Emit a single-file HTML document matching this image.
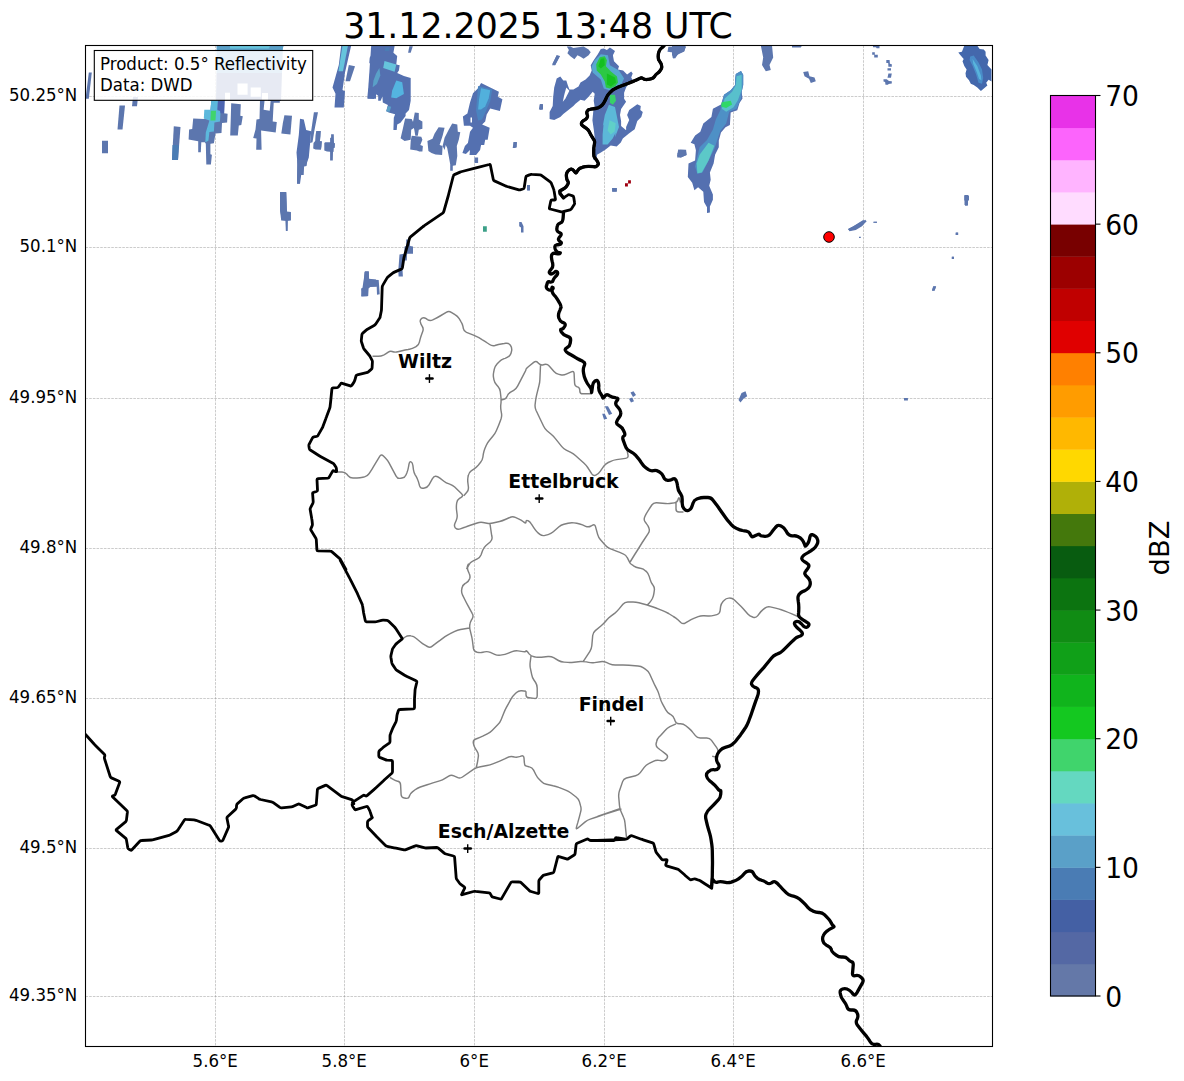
<!DOCTYPE html><html><head><meta charset="utf-8"><title>Radar</title><style>html,body{margin:0;padding:0;background:#fff}</style></head><body><svg width="1184" height="1081" viewBox="0 0 1184 1081" style="display:block;font-family:'DejaVu Sans','Liberation Sans',sans-serif">
<rect width="1184" height="1081" fill="#fff"/>
<defs><clipPath id="ax"><rect x="85.5" y="45.5" width="907.0" height="1001.0"/></clipPath></defs>
<g clip-path="url(#ax)">
<path d="M85.5 96.5H992.5M85.5 247.5H992.5M85.5 398.5H992.5M85.5 548.5H992.5M85.5 698.5H992.5M85.5 848.5H992.5M85.5 996.5H992.5M215.5 45.5V1046.5M344.5 45.5V1046.5M474.5 45.5V1046.5M604.5 45.5V1046.5M733.5 45.5V1046.5M863.5 45.5V1046.5" fill="none" stroke="#808080" stroke-opacity="0.5" stroke-width="0.8" stroke-dasharray="2.57 1.11"/>
<path d="M88.8 72.5L91.8 72.5L88.8 98.8L85.5 98.8Z" fill="#5c76ae"/>
<path d="M119.5 105.5L125.0 105.5L122.5 129.5L117.5 129.5Z" fill="#5c76ae"/>
<path d="M133.0 97.0L138.0 97.0L137.0 106.2L132.0 106.2Z" fill="#5c76ae"/>
<path d="M102.0 140.8L108.0 140.8L108.0 153.2L102.0 153.2Z" fill="#5c76ae"/>
<path d="M173.8 126.2L180.5 127.0L178.0 160.0L172.0 160.0Z" fill="#5c76ae"/>
<path d="M172.5 145.0L178.8 145.0L178.0 160.0L172.0 160.0Z" fill="#4a7cb4"/>
<path d="M216.5 45.0L283.0 45.0L282.0 73.0L216.5 73.0Z" fill="#6aa8d4"/>
<path d="M216.5 73.0L282.0 73.0L281.0 101.0L216.0 101.0Z" fill="#5c76ae"/>
<path d="M237.5 83.6L247.6 83.6L247.6 94.7L237.5 94.7Z" fill="#fff"/>
<path d="M250.7 87.6L260.8 87.6L260.8 96.7L250.7 96.7Z" fill="#fff"/>
<path d="M225.0 92.7L230.0 92.7L230.0 101.0L225.0 101.0Z" fill="#fff"/>
<path d="M262.0 93.0L268.0 93.0L268.0 101.0L262.0 101.0Z" fill="#fff"/>
<path d="M217.0 45.5L283.8 45.5L282.0 50.5L217.0 50.5Z" fill="#5aa0c8"/>
<path d="M230.0 45.5L270.0 45.5L268.8 48.5L230.0 48.5Z" fill="#66c4dc"/>
<path d="M300.0 118.8L303.8 119.5L306.2 130.0L311.2 131.2L308.8 157.5L306.2 165.0L302.5 165.0L300.0 183.8L297.0 183.8L297.5 165.0L296.5 152.5L298.8 135.0Z" fill="#5470b0"/>
<path d="M280.0 192.0L286.2 192.5L287.0 212.0L290.8 212.5L290.8 220.0L287.5 220.5L287.5 230.8L285.8 230.8L285.5 220.5L282.0 220.0L280.0 210.0Z" fill="#5c76ae"/>
<path d="M341.2 45.5L351.2 45.5L345.0 72.5L342.5 90.0L345.0 91.2L343.8 107.5L334.5 107.5L335.5 93.8L332.5 87.5L338.8 65.0Z" fill="#5470b0"/>
<path d="M342.5 45.5L348.0 45.5L343.0 71.2L338.5 71.2Z" fill="#66c4dc"/>
<path d="M348.8 65.0L355.0 66.2L350.0 81.2L345.5 81.2Z" fill="#5c76ae"/>
<path d="M371.2 45.5L376.0 45.5L376.0 98.8L367.5 98.8Z" fill="#5470b0"/>
<path d="M365.0 271.2L368.8 271.2L368.8 278.8L376.0 279.5L376.0 286.2L367.5 287.5L367.5 296.2L361.2 296.2Z" fill="#5c76ae"/>
<path d="M193.2 118.4L204.3 118.9L210.4 110.3L211.4 100.1L224.6 100.1L224.1 113.3L227.6 113.8L227.1 122.4L222.0 122.9L221.5 133.1L215.5 133.6L213.9 143.2L210.4 143.7L210.4 154.3L211.9 154.8L210.9 164.5L206.3 164.5L205.8 143.7L204.8 142.2L201.3 142.2L200.8 152.3L198.2 152.3L198.2 141.2L188.6 139.6L189.1 129.5L192.2 129.0Z" fill="#5c76ae"/>
<path d="M204.3 109.8L210.4 109.8L211.4 100.1L218.0 100.1L217.5 110.3L220.5 111.3L220.0 121.4L214.4 122.4L213.9 131.5L209.4 132.0L208.4 140.7L205.3 142.2L205.8 132.6L209.4 120.4L203.8 118.4Z" fill="#5cb8dc"/>
<path d="M210.9 110.8L216.0 110.8L215.5 120.4L210.4 120.4Z" fill="#40d46c"/>
<path d="M218.0 100.1L224.6 100.1L224.1 113.3L220.5 113.3L220.0 110.3L217.5 109.8Z" fill="#4c64b0"/>
<path d="M231.2 103.2L240.8 104.2L240.3 115.8L242.8 116.3L241.3 125.0L238.8 125.5L237.8 135.6L230.2 135.4L230.7 120.4Z" fill="#5c76ae"/>
<path d="M260.0 100.1L264.6 100.1L263.6 109.8L269.7 110.8L270.7 100.1L279.8 100.1L279.8 102.7L273.7 102.7L272.7 121.4L276.8 121.9L275.7 132.6L261.1 130.5L261.6 149.8L256.2 149.8L256.5 138.6L253.2 138.1L255.5 129.5L256.5 119.4L259.5 118.9Z" fill="#5c76ae"/>
<path d="M284.4 115.3L292.0 115.8L290.4 134.6L281.3 133.6L282.8 123.4Z" fill="#5c76ae"/>
<path d="M313.9 112.2L318.0 112.2L314.5 130.1L312.5 142.3L310.1 143.0L310.8 133.5Z" fill="#5c76ae"/>
<path d="M316.2 131.1L320.9 131.1L320.6 136.2L319.9 140.9L322.0 141.3L321.6 146.4L320.9 149.7L315.5 149.4L313.2 148.4L313.5 143.0L315.2 140.9L315.5 135.5Z" fill="#5c76ae"/>
<path d="M331.1 134.2L333.8 134.2L334.0 143.0L335.0 143.3L334.8 147.7L333.8 148.0L333.6 151.8L333.0 152.1L332.8 160.5L330.1 160.5L330.1 151.8L327.0 151.4L324.3 150.4L324.3 143.0L325.3 142.3L330.1 142.3L330.1 137.9L331.1 137.6Z" fill="#5c76ae"/>
<path d="M373.9 45.9L394.6 45.9L393.4 52.7L397.2 56.0L396.3 64.5L399.7 65.3L398.9 70.4L397.2 72.9L403.9 75.9L410.7 78.0L410.7 100.8L409.0 110.1L405.6 113.5L405.6 116.0L400.5 122.8L397.2 124.5L396.7 130.0L393.4 130.0L393.8 117.7L395.1 114.3L388.7 112.6L386.2 110.9L387.9 105.0L382.8 102.5L382.4 96.6L380.7 100.8L378.2 100.8L378.2 95.7L375.6 94.1L373.9 99.1L367.6 98.3L368.0 90.7L370.1 83.9L370.1 69.6L371.0 65.3L369.3 62.8L369.7 57.7L372.7 52.7Z" fill="#5470b0"/>
<path d="M384.5 61.1L396.3 64.5L394.6 71.7L383.2 67.9Z" fill="#66c4dc"/>
<path d="M396.3 80.5L402.2 82.2L403.9 94.1L396.3 98.3L391.2 97.4L392.1 90.7Z" fill="#54b4e0"/>
<path d="M376.0 73.8L379.4 67.9L380.3 75.5L376.9 83.9L372.7 87.3L373.5 80.5Z" fill="#5aa0c8"/>
<path d="M387.9 105.9L391.2 106.7L389.6 111.8L386.2 111.4Z" fill="#5aa0c8"/>
<path d="M385.3 47.6L389.6 47.6L389.1 51.0L384.9 51.0Z" fill="#4a7cb4"/>
<path d="M409.4 46.3L412.8 46.3L410.7 52.7L408.1 52.7Z" fill="#5c76ae"/>
<path d="M481.1 83.1L498.9 91.7L497.8 96.8L502.4 99.3L499.9 111.0L490.2 108.4L486.7 114.5L485.2 121.6L482.1 124.6L489.7 127.7L487.7 139.8L485.2 139.8L484.2 144.9L481.1 144.9L480.1 150.0L476.1 155.0L469.5 155.0L470.0 150.0L465.9 154.0L462.4 153.0L464.9 145.9L467.9 142.9L470.0 131.7L473.0 127.7L470.0 125.7L463.9 125.7L462.9 116.5L467.4 113.5L470.0 102.4L473.0 93.2L478.1 88.2Z" fill="#5470b0"/>
<path d="M478.1 86.1L492.3 89.2L490.2 101.3L486.2 110.5L482.1 119.6L478.1 120.6L476.1 110.5L477.1 97.3Z" fill="#4a84c0"/>
<path d="M481.1 88.2L490.2 90.2L488.7 98.3L485.2 106.4L481.1 109.4L478.1 109.4L479.1 99.3Z" fill="#52b0dc"/>
<path d="M470.5 117.6L472.0 117.6L472.0 122.6L470.5 122.6Z" fill="#fff"/>
<path d="M474.5 157.6L478.1 157.6L478.1 163.1L474.5 163.1Z" fill="#5c76ae"/>
<path d="M438.6 127.2L444.6 127.7L442.6 135.8L439.6 144.9L442.6 145.9L442.1 155.0L435.5 154.5L431.5 153.0L428.4 151.0L427.4 140.9L432.5 138.8L434.5 133.8Z" fill="#5c76ae"/>
<path d="M452.2 123.6L457.3 124.6L457.8 131.7L460.3 132.2L458.8 139.8L456.8 145.9L457.3 156.1L455.8 165.2L452.8 165.7L452.8 170.7L450.2 170.7L450.2 164.2L448.7 156.1L447.2 147.9L445.7 144.9L444.6 150.0L442.6 145.9L444.6 137.8L448.7 129.7Z" fill="#5c76ae"/>
<path d="M405.1 118.6L411.7 119.1L413.7 123.6L414.3 127.7L411.2 129.7L410.7 139.8L404.6 140.9L400.6 138.3L402.6 129.7Z" fill="#5c76ae"/>
<path d="M414.8 112.5L418.8 113.0L418.8 119.6L422.4 121.6L422.4 128.7L418.8 129.7L417.8 135.8L415.3 135.8L414.3 129.7L412.7 123.6Z" fill="#5c76ae"/>
<path d="M411.7 135.8L421.3 136.8L422.4 139.8L420.3 144.9L422.9 145.9L422.4 151.5L419.3 151.5L416.8 150.5L410.2 149.5L410.7 140.9Z" fill="#5c76ae"/>
<path d="M513.6 142.2L517.0 142.2L515.6 148.1L512.7 148.1Z" fill="#5c76ae"/>
<path d="M539.8 104.2L543.1 104.2L541.5 109.6L538.9 109.6Z" fill="#5c76ae"/>
<path d="M527.1 184.9L529.6 184.9L529.6 190.3L527.1 190.3Z" fill="#5c76ae"/>
<path d="M600.8 49.1L603.8 48.6L606.9 50.1L609.9 47.6L615.0 51.1L612.9 55.2L614.0 61.3L619.0 66.3L618.0 69.4L623.1 70.4L627.1 74.4L631.2 71.4L632.7 73.4L631.2 77.5L632.7 80.0L629.2 82.6L626.1 87.6L624.1 92.7L624.1 98.8L626.1 101.8L621.1 108.9L620.0 115.0L621.1 121.1L621.1 126.1L626.1 130.2L626.1 127.1L629.2 120.0L627.1 115.0L629.2 109.9L637.3 104.3L640.8 105.9L640.3 109.9L642.8 111.9L641.3 117.0L637.3 121.1L634.7 129.2L628.9 133.4L622.8 138.5L620.8 142.6L616.7 146.6L610.7 145.6L605.6 149.6L600.5 152.7L597.0 154.7L596.5 160.8L593.4 159.8L593.4 156.7L595.5 147.6L595.0 140.5L593.9 130.4L592.4 120.3L593.4 110.1L596.7 109.9L594.7 106.9L593.7 100.8L594.7 93.7L592.7 91.7L588.6 96.7L584.6 100.8L580.5 99.8L575.5 103.8L573.4 105.9L568.4 109.9L563.3 114.0L560.3 117.0L554.2 120.0L549.6 119.0L549.6 111.9L552.7 105.9L553.2 96.7L554.2 87.6L556.7 78.5L560.3 76.5L563.3 80.5L566.3 80.5L567.9 85.6L569.4 89.6L573.4 89.6L578.5 86.6L580.5 82.6L585.6 79.5L589.6 75.5L591.7 70.4L590.7 65.3L593.7 60.3L597.8 54.2Z" fill="#5470b0"/>
<path d="M566.3 87.6L569.4 90.7L565.3 98.8L562.8 101.8L564.3 94.7Z" fill="#fff"/>
<path d="M594.7 60.3L600.8 54.2L607.9 55.2L609.9 65.3L619.0 70.4L624.1 78.5L621.1 84.6L617.0 88.6L610.9 90.7L603.8 88.6L600.8 79.5L592.7 72.4L591.7 66.3Z" fill="#58a8d0"/>
<path d="M599.8 57.2L604.8 56.2L606.9 60.3L605.9 66.3L610.9 71.4L617.0 76.5L618.0 82.6L615.0 86.6L609.9 88.6L605.9 87.6L604.8 81.5L600.8 74.4L596.7 70.4L596.2 64.3Z" fill="#2cc844"/>
<path d="M600.8 58.7L604.3 58.2L604.8 65.3L600.8 68.4L598.3 66.3Z" fill="#14c020"/>
<path d="M606.9 73.4L615.0 77.5L616.0 82.6L610.9 86.6L606.9 84.6Z" fill="#14c020"/>
<path d="M609.9 94.7L615.0 94.7L616.0 100.8L612.9 104.8L609.9 102.8Z" fill="#38d068"/>
<path d="M608.9 104.8L615.0 106.9L617.0 117.0L619.0 127.1L615.0 137.3L616.7 122.3L616.7 130.4L612.7 138.5L607.6 144.6L602.6 144.6L602.6 134.4L603.6 124.3L602.8 126.1L604.8 115.0Z" fill="#5cb8d8"/>
<path d="M609.6 120.3L615.7 123.3L614.7 131.4L610.7 134.4L607.6 130.4Z" fill="#60d0c8"/>
<path d="M566.8 46.6L570.4 46.6L573.4 48.1L583.6 46.6L588.6 49.6L590.7 52.2L588.6 55.2L583.6 58.7L580.5 56.7L577.5 55.2L574.4 59.3L570.4 56.2L567.4 53.2L568.9 50.1Z" fill="#5c76ae"/>
<path d="M556.7 55.2L559.8 56.2L555.2 65.3L552.2 64.3Z" fill="#5c76ae"/>
<path d="M540.0 104.3L542.5 104.3L542.5 109.4L540.0 109.4Z" fill="#5c76ae"/>
<path d="M668.4 46.8L686.1 46.8L683.6 51.8L678.5 53.5L675.1 58.6L672.6 57.7L675.1 52.7L667.5 51.8Z" fill="#5c76ae"/>
<path d="M680.2 149.8L686.1 149.8L686.6 154.9L681.0 157.4L677.2 157.4L677.7 153.2Z" fill="#5c76ae"/>
<path d="M612.2 188.1L616.7 188.1L616.7 191.7L612.2 191.7Z" fill="#5c76ae"/>
<path d="M628.1 180.2L630.9 180.2L630.9 183.6L627.9 183.6L627.9 186.6L625.0 186.6L625.0 183.3L628.1 183.3Z" fill="#a00010"/>
<path d="M556.7 55.2L560.0 56.0L555.0 65.3L552.1 65.3Z" fill="#5c76ae"/>
<path d="M760.8 45.5L772.0 45.5L773.2 57.5L769.5 65.0L770.8 70.0L765.8 71.2L762.0 65.0L763.2 57.5Z" fill="#5c76ae"/>
<path d="M792.0 45.5L802.0 45.5L800.8 47.5L792.0 47.5Z" fill="#5c76ae"/>
<path d="M803.2 72.0L808.2 71.2L809.5 76.2L814.5 77.5L815.8 81.2L810.8 83.0L809.0 78.8L804.5 76.2Z" fill="#5c76ae"/>
<path d="M678.2 149.5L685.8 150.0L686.5 155.0L680.8 157.5L677.0 156.2Z" fill="#5c76ae"/>
<path d="M672.0 45.5L685.8 45.5L684.5 51.2L677.0 55.0L673.2 58.8L672.0 55.0Z" fill="#5c76ae"/>
<path d="M848.2 228.8L853.2 226.2L863.2 220.0L865.8 222.0L862.0 226.2L855.8 230.0L849.5 231.2Z" fill="#5c76ae"/>
<path d="M873.2 221.8L877.0 221.8L877.0 222.8L873.2 222.8Z" fill="#5c76ae"/>
<path d="M859.0 236.8L860.8 236.8L860.8 238.0L859.0 238.0Z" fill="#5c76ae"/>
<path d="M955.8 232.5L958.2 232.5L958.2 235.0L955.8 235.0Z" fill="#5c76ae"/>
<path d="M952.0 256.8L954.0 256.8L954.0 259.0L952.0 259.0Z" fill="#5c76ae"/>
<path d="M933.2 286.2L936.2 286.2L934.5 290.8L932.0 290.8Z" fill="#5c76ae"/>
<path d="M964.5 195.0L968.0 195.0L968.0 205.0L964.5 205.0Z" fill="#5c76ae"/>
<path d="M735.8 74.1L741.0 71.1L743.2 74.8L743.2 85.1L741.7 91.8L742.5 98.5L739.5 102.9L737.3 110.3L730.7 112.5L729.9 125.1L725.5 127.3L721.0 132.5L718.8 140.6L718.8 147.3L715.1 154.7L713.6 163.6L709.9 172.4L710.7 179.8L709.2 185.7L712.9 194.6L712.9 199.8L709.9 206.4L709.9 212.4L707.0 213.1L707.0 207.2L704.0 202.0L703.3 191.7L698.1 187.2L694.4 190.2L692.2 182.8L687.8 176.9L688.5 163.6L695.1 160.6L695.9 150.2L694.4 144.3L690.7 142.8L695.1 135.4L700.3 131.7L703.3 123.6L711.4 117.0L712.9 108.8L721.0 104.4L724.0 94.8L730.7 90.3L735.1 85.1L735.1 79.2Z" fill="#5470b0"/>
<path d="M735.8 74.1L741.0 71.1L743.2 74.8L743.2 85.1L741.7 91.8L741.0 98.5L736.6 108.8L729.2 111.8L726.2 123.6L720.3 131.0L717.3 139.9L714.4 148.8L708.5 160.6L702.5 172.4L697.4 173.9L695.1 166.5L697.4 156.2L699.6 147.3L707.0 139.9L712.9 129.5L715.9 119.2L720.3 110.3L724.0 94.8L730.7 90.3L735.1 85.1L735.1 79.2Z" fill="#4e90c6"/>
<path d="M736.6 76.3L741.7 74.8L741.7 89.6L738.0 99.9L733.6 107.3L726.2 111.8L721.8 108.8L724.7 98.5L732.1 91.8L735.8 85.1Z" fill="#58c0cc"/>
<path d="M721.8 102.2L730.7 100.7L732.1 104.4L726.2 108.1L721.0 106.6Z" fill="#30d868"/>
<path d="M708.5 142.8L714.4 145.8L708.5 160.6L701.8 172.4L697.4 173.2L696.6 163.6L699.6 154.7Z" fill="#5cc8c8"/>
<path d="M964.3 45.7L977.3 45.7L979.7 48.9L983.8 49.5L985.6 51.8L985.6 55.4L988.6 60.1L987.4 64.9L991.5 69.6L991.5 81.5L988.6 79.7L986.2 82.7L987.4 85.6L980.9 90.9L977.3 87.4L973.7 85.0L970.8 83.8L969.0 80.3L966.0 76.7L965.5 73.2L966.6 69.6L964.3 66.1L962.5 61.3L963.7 59.0L960.7 55.4L958.3 52.4L961.9 51.8Z" fill="#4468ac"/>
<path d="M970.2 56.6L973.7 55.4L978.5 62.5L982.0 69.6L983.2 77.9L982.0 83.8L978.5 82.7L976.1 74.4L972.6 66.1L969.6 60.1Z" fill="#4a8cc8"/>
<path d="M972.6 59.0L977.3 66.1L980.9 75.5L981.4 80.3L979.1 79.1L976.7 72.0L973.2 63.7Z" fill="#58b4dc"/>
<path d="M873.0 45.7L879.5 45.7L879.5 48.3L876.6 48.3L876.0 47.3L873.0 47.3Z" fill="#5c76ae"/>
<path d="M872.2 52.2L874.8 52.2L874.8 54.8L877.8 54.8L877.8 57.5L874.2 57.5L874.2 54.8L872.2 54.8Z" fill="#5c76ae"/>
<path d="M886.3 60.1L889.6 60.1L889.9 63.7L891.8 64.3L891.8 66.7L888.4 66.7L888.2 63.1L886.3 63.1Z" fill="#5c76ae"/>
<path d="M887.5 68.2L891.0 68.2L891.0 70.6L887.5 70.6Z" fill="#5c76ae"/>
<path d="M888.4 73.4L891.8 73.4L891.0 77.7L887.5 77.7Z" fill="#5c76ae"/>
<path d="M883.5 79.3L886.7 79.3L889.0 80.9L891.8 81.2L891.8 83.6L888.4 84.1L888.2 84.8L885.5 84.8L885.1 82.1L883.5 81.5Z" fill="#5c76ae"/>
<path d="M964.3 195.5L969.0 195.5L969.0 200.6L964.3 200.6Z" fill="#5c76ae"/>
<path d="M965.0 203.0L967.8 203.0L967.8 205.8L965.0 205.8Z" fill="#5c76ae"/>
<path d="M955.7 232.8L958.0 232.8L958.0 235.1L955.7 235.1Z" fill="#5c76ae"/>
<path d="M951.7 256.8L953.8 256.8L953.8 258.9L951.7 258.9Z" fill="#5c76ae"/>
<path d="M933.3 286.4L935.9 286.4L934.7 290.4L931.9 290.4Z" fill="#5c76ae"/>
<path d="M904.0 398.1L907.9 398.1L907.9 400.6L904.0 400.6Z" fill="#5c76ae"/>
<path d="M847.8 229.5L865.3 219.7L866.7 221.6L850.1 230.9Z" fill="#5c76ae"/>
<path d="M874.1 221.8L876.9 221.8L876.9 222.8L874.1 222.8Z" fill="#5c76ae"/>
<path d="M297.3 160.0L307.1 160.0L306.6 165.9L304.1 166.4L303.7 174.9L300.2 174.9L299.8 183.6L297.0 183.6Z" fill="#5c76ae"/>
<path d="M280.4 192.1L286.3 192.1L286.8 211.5L290.9 212.0L290.9 220.5L287.8 220.8L287.5 230.9L286.1 230.9L285.8 220.8L281.2 220.5L280.1 210.7Z" fill="#5c76ae"/>
<path d="M406.2 239.4L409.6 239.4L410.1 246.1L413.0 246.5L413.0 253.8L407.1 253.8L406.8 260.5L402.9 260.5L402.5 269.8L402.9 276.6L398.6 276.6L398.3 270.6L399.5 254.6L404.1 253.8L404.6 246.5L406.2 246.1Z" fill="#5c76ae"/>
<path d="M364.5 271.8L368.8 271.8L369.1 279.6L378.7 279.9L379.7 294.3L377.0 294.8L376.7 286.7L370.3 286.7L368.6 288.4L368.2 296.0L361.5 296.5L361.1 288.4L363.5 287.5Z" fill="#5c76ae"/>
<path d="M483.0 226.2L486.8 226.2L486.8 231.8L483.0 231.8Z" fill="#3ca088"/>
<path d="M519.2 222.0L521.5 222.0L523.5 226.2L523.5 232.5L521.0 232.5L521.0 227.5L519.2 226.2Z" fill="#5c76ae"/>
<path d="M527.2 185.0L530.0 185.0L530.0 190.5L527.2 190.5Z" fill="#5c76ae"/>
<path d="M513.5 142.0L516.8 142.0L516.8 147.5L513.5 147.5Z" fill="#5c76ae"/>
<path d="M539.8 104.5L543.0 104.5L543.0 109.5L539.8 109.5Z" fill="#5c76ae"/>
<path d="M612.2 188.0L616.8 188.0L616.8 191.5L612.2 191.5Z" fill="#5c76ae"/>
<path d="M630.5 392.5L633.5 391.2L636.0 395.0L633.0 397.0Z" fill="#5c76ae"/>
<path d="M629.0 398.8L632.2 397.5L634.0 401.2L631.0 402.5Z" fill="#5c76ae"/>
<path d="M604.8 406.2L608.0 406.2L612.2 413.8L609.0 415.0Z" fill="#5c76ae"/>
<path d="M602.2 413.8L604.8 413.8L607.2 418.8L604.0 419.5Z" fill="#5c76ae"/>
<path d="M741.5 393.0L745.5 391.2L747.2 396.2L743.5 398.8L740.5 402.5L738.5 400.0Z" fill="#5c76ae"/>
<path d="M372.5 356.2L378.2 356.2Q381.2 356.2 383.5 355.1L384.0 354.9Q386.2 353.8 387.9 352.4L388.3 352.1Q390.0 350.8 392.2 351.5L392.8 351.7Q395.0 352.5 397.9 351.8L402.1 350.7Q405.0 350.0 408.0 349.5L409.5 349.2Q412.5 348.8 415.1 347.2L416.2 346.5Q418.8 345.0 419.4 342.1L419.8 340.4Q420.5 337.5 421.5 334.7L422.7 331.6Q423.8 328.8 422.3 326.5L422.0 326.0Q420.5 323.8 420.3 321.8L420.2 321.4Q420.0 319.5 421.7 318.4L422.1 318.1Q423.8 317.0 426.2 318.7L427.5 319.6Q430.0 321.2 432.7 319.9L434.8 318.8Q437.5 317.5 440.1 316.0L446.2 312.3Q448.8 310.8 451.3 312.3L455.0 314.7Q457.5 316.2 459.2 318.7L460.8 321.3Q462.5 323.8 463.0 326.7L463.3 328.3Q463.8 331.2 466.5 332.4L473.5 335.1Q476.2 336.2 478.9 337.7L482.4 339.8Q485.0 341.2 487.4 343.0L489.6 344.5Q492.0 346.2 494.9 345.5L498.4 344.5Q501.2 343.8 504.2 343.5L505.8 343.3Q508.8 343.0 510.2 345.0L510.5 345.5Q512.0 347.5 511.7 350.3L511.6 350.9Q511.2 353.8 509.8 355.4L509.5 355.8Q508.0 357.5 505.1 358.4L504.1 358.6Q501.2 359.5 499.2 361.7L497.0 364.0Q495.0 366.2 494.3 369.2L493.7 372.1Q493.0 375.0 493.6 377.9L493.9 379.6Q494.5 382.5 496.5 384.8L498.0 386.5Q500.0 388.8 500.3 391.7L500.9 397.0Q501.2 400.0 501.0 403.0L500.8 404.5Q500.5 407.5 501.0 410.5L501.5 413.3Q502.0 416.2 501.0 419.1L499.8 422.2Q498.8 425.0 497.6 427.8L496.2 431.0Q495.0 433.8 493.0 436.0L489.5 440.2Q487.5 442.5 486.3 445.3L484.9 448.5Q483.8 451.2 483.3 454.2L482.9 457.0Q482.5 460.0 480.6 462.3L478.2 465.2Q476.2 467.5 473.8 469.2L471.2 470.8Q468.8 472.5 468.3 475.5L468.0 477.0Q467.5 480.0 467.9 483.0L468.4 487.0Q468.8 490.0 466.8 492.3L463.8 495.8M501.2 400.0L504.0 399.3Q506.2 398.8 507.0 396.5L507.2 396.0Q508.0 393.8 510.6 392.2L513.7 390.3Q516.2 388.8 517.6 386.1L524.6 372.7Q526.0 370.0 526.0 369.4L526.0 369.3Q526.0 368.8 528.3 366.8L533.7 362.4Q536.0 360.5 538.0 362.7L538.5 363.3Q540.5 365.5 543.4 364.7L544.3 364.5Q547.2 363.8 549.2 366.0L554.0 371.5Q556.0 373.8 558.9 374.4L560.6 374.8Q563.5 375.5 566.2 374.2L571.3 371.8Q574.0 370.5 574.1 373.5L574.6 383.3Q574.8 386.2 577.0 386.8L577.5 386.9Q579.8 387.5 579.8 390.3L579.8 390.9Q579.8 393.8 582.8 393.8L591.5 393.8M336.8 472.0L342.0 472.0Q345.0 472.0 346.9 474.3L348.1 475.7Q350.0 478.0 353.0 478.0L357.0 478.0Q360.0 478.0 362.9 477.3L364.6 476.9Q367.5 476.2 369.1 473.7L372.2 468.8Q373.8 466.2 375.3 463.7L379.7 456.3Q381.2 453.8 383.4 455.9L385.4 457.9Q387.5 460.0 388.9 462.6L396.1 476.1Q397.5 478.8 400.5 478.3L402.0 478.0Q405.0 477.5 406.1 474.7L406.9 472.8Q408.0 470.0 408.5 467.0L409.0 464.2Q409.5 461.2 410.9 461.8L411.1 461.9Q412.5 462.5 412.9 465.5L413.4 469.5Q413.8 472.5 415.3 475.1L416.0 476.2Q417.5 478.8 418.4 481.6L419.6 485.9Q420.5 488.8 423.5 488.2L424.5 488.0Q427.5 487.5 429.0 484.9L432.3 478.9Q433.8 476.2 435.4 476.2L435.8 476.2Q437.5 476.2 439.9 478.1L443.9 481.2Q446.2 483.0 449.1 483.9L449.7 484.1Q452.5 485.0 454.7 487.1L461.6 493.7Q463.8 495.8 461.2 497.3L459.5 498.4Q457.0 500.0 456.7 503.0L456.5 504.5Q456.2 507.5 456.6 510.5L457.1 514.5Q457.5 517.5 456.3 520.3L454.9 523.5Q453.8 526.2 455.4 527.9L455.8 528.3Q457.5 530.0 460.3 528.9L464.7 527.3Q467.5 526.2 470.3 525.3L477.2 523.0Q480.0 522.0 483.0 522.5L487.0 523.2Q490.0 523.8 492.9 523.0L499.6 521.5Q502.5 520.8 505.2 519.5L509.8 517.5Q512.5 516.2 515.3 517.4L518.5 518.8Q521.2 520.0 523.4 521.7L523.9 522.1Q526.0 523.8 526.0 522.1L526.0 521.7Q526.0 520.0 527.7 520.6L528.1 520.7Q529.8 521.2 531.3 523.8L534.4 528.7Q536.0 531.2 538.3 533.1L539.9 534.4Q542.2 536.2 545.1 535.4L548.1 534.6Q551.0 533.8 553.3 531.8L558.7 527.0Q561.0 525.0 563.9 524.3L568.1 523.2Q571.0 522.5 574.0 522.9L576.8 523.3Q579.8 523.8 582.5 524.9L585.7 526.3Q588.5 527.5 591.1 526.0L592.2 525.3Q594.8 523.8 595.5 526.6L597.7 534.6Q598.5 537.5 600.5 539.8L605.3 545.2Q607.2 547.5 610.0 548.6L617.0 551.4Q619.8 552.5 622.5 553.6L623.2 553.9Q626.0 555.0 627.3 557.7L628.4 559.8Q629.8 562.5 630.1 563.1L630.2 563.2Q630.5 563.8 633.0 565.4L633.5 565.8Q636.0 567.5 639.0 568.0L640.5 568.3Q643.5 568.8 645.6 570.9L646.4 571.6Q648.5 573.8 649.3 576.6L650.2 579.6Q651.0 582.5 652.7 584.8L653.1 585.2Q654.8 587.5 654.3 590.5L653.9 593.3Q653.5 596.2 652.4 598.5L652.1 599.0Q651.0 601.2 649.3 602.9L647.2 605.0M490.0 523.8L490.8 529.5Q491.2 532.5 491.7 535.5L492.0 537.0Q492.5 540.0 490.2 542.0L486.0 545.5Q483.8 547.5 482.7 550.3L481.1 554.7Q480.0 557.5 477.3 558.8L472.7 561.2Q470.0 562.5 468.7 565.2L467.6 567.3Q466.2 570.0 467.2 567.2L467.8 565.3Q468.8 562.5 468.0 565.3L467.8 565.9Q467.0 568.8 468.3 571.5L469.2 573.5Q470.5 576.2 469.7 578.5L469.5 579.0Q468.8 581.2 466.2 582.8L465.1 583.5Q462.5 585.0 462.0 588.0L461.7 589.5Q461.2 592.5 462.6 595.2L464.9 599.8Q466.2 602.5 467.7 605.1L472.3 613.6Q473.8 616.2 472.2 618.8L471.5 619.9Q470.0 622.5 469.8 625.0L469.7 625.5Q469.5 628.0 470.3 630.9L471.2 634.6Q472.0 637.5 472.4 640.5L473.4 648.3Q473.8 651.2 476.6 652.0L477.2 652.2Q480.0 653.0 482.9 652.3L484.6 651.9Q487.5 651.2 490.3 652.4L494.7 654.3Q497.5 655.5 500.5 655.1L502.0 654.9Q505.0 654.5 507.8 653.4L512.2 651.6Q515.0 650.5 518.0 650.9L523.0 651.6Q526.0 652.0 526.0 651.1L526.0 650.9Q526.0 650.0 527.9 652.3L529.1 653.9Q531.0 656.2 534.0 656.7L535.5 657.0Q538.5 657.5 541.5 657.2L548.0 656.5Q551.0 656.2 553.6 657.7L558.4 660.5Q561.0 662.0 564.0 662.1L568.0 662.4Q571.0 662.5 574.0 662.2L580.5 661.5Q583.5 661.2 586.4 661.9L588.6 662.4Q591.5 663.0 594.5 662.6L600.5 661.7Q603.5 661.2 606.3 662.4L609.5 663.8Q612.2 665.0 615.2 665.0L623.0 665.0Q626.0 665.0 629.0 665.2L638.0 666.0Q641.0 666.2 643.5 667.9L646.0 669.6Q648.5 671.2 649.7 674.0L652.3 679.8Q653.5 682.5 654.8 685.2L657.2 689.8Q658.5 692.5 659.3 695.4L660.2 698.4Q661.0 701.2 662.5 703.9L665.8 709.9Q667.2 712.5 669.8 714.0L670.9 714.7Q673.5 716.2 674.4 719.1L675.1 720.9Q676.0 723.8 679.0 723.8L680.5 723.8Q683.5 723.8 685.8 725.7L688.7 728.1Q691.0 730.0 692.8 732.4L695.4 735.6Q697.2 738.0 700.2 738.0L706.8 738.0Q709.8 738.0 711.5 740.4L716.7 747.6Q718.5 750.0 718.0 753.0L717.7 754.5Q717.2 757.5 715.0 756.9L712.2 756.2M540.5 365.5L539.9 379.5Q539.8 382.5 539.0 385.4L536.7 394.6Q536.0 397.5 535.6 400.5L535.1 404.5Q534.8 407.5 536.0 410.2L543.5 426.0Q544.8 428.8 547.0 430.7L551.2 434.3Q553.5 436.2 555.4 438.6L561.6 446.4Q563.5 448.8 566.2 450.1L570.8 452.4Q573.5 453.8 575.7 455.8L583.8 463.0Q586.0 465.0 587.7 467.5L591.8 473.8Q593.5 476.2 595.8 475.1L596.2 474.9Q598.5 473.8 600.2 471.3L603.8 466.2Q605.5 463.8 608.2 462.5L610.8 461.3Q613.5 460.0 616.5 459.6L625.5 458.4Q628.5 458.0 628.0 455.1L627.2 451.2M629.8 562.5L634.4 555.0Q636.0 552.5 637.6 550.0L640.7 545.0Q642.2 542.5 643.9 540.0L648.1 533.7Q649.8 531.2 649.2 529.0L649.1 528.5Q648.5 526.2 646.6 523.9L645.4 522.3Q643.5 520.0 644.6 517.2L644.9 516.5Q646.0 513.8 647.7 511.3L651.8 505.0Q653.5 502.5 656.5 502.7L665.5 503.5Q668.5 503.8 671.5 503.3L674.3 502.9Q677.2 502.5 678.0 499.7L678.2 499.1Q679.0 496.2 679.7 499.1L680.5 502.5M676.0 502.5L676.0 509.0Q676.0 512.0 679.0 512.0L683.5 512.0M402.5 638.8L405.2 637.0Q407.5 635.5 410.3 635.8L410.9 635.9Q413.8 636.2 416.0 638.2L420.2 641.8Q422.5 643.8 425.1 645.2L427.4 646.5Q430.0 648.0 432.3 646.1L435.2 643.9Q437.5 642.0 440.0 640.3L445.0 636.7Q447.5 635.0 450.2 633.7L454.8 631.3Q457.5 630.0 460.5 629.5L469.5 628.0M526.0 691.2L521.7 690.8Q518.8 690.5 516.5 692.5L514.7 694.2Q512.5 696.2 511.1 698.9L506.4 707.4Q505.0 710.0 503.9 712.8L501.1 719.7Q500.0 722.5 497.9 724.6L492.1 730.4Q490.0 732.5 487.3 733.8L482.7 736.2Q480.0 737.5 477.2 738.5L475.8 739.0Q473.0 740.0 473.3 742.8L473.4 743.4Q473.8 746.2 475.4 748.7L477.1 751.3Q478.8 753.8 478.3 756.7L477.9 759.5Q477.5 762.5 476.9 764.8L476.2 767.5M390.0 777.5L392.8 779.1Q395.0 780.5 397.5 781.2L398.0 781.3Q400.5 782.0 400.6 785.0L401.1 794.5Q401.2 797.5 404.2 798.0L405.8 798.3Q408.8 798.8 409.3 796.5L409.4 796.0Q410.0 793.8 412.4 791.9L415.1 789.8Q417.5 788.0 420.3 787.0L427.2 784.7Q430.0 783.8 432.9 782.9L439.6 780.9Q442.5 780.0 445.0 778.4L448.7 776.1Q451.2 774.5 453.9 775.8L457.3 777.4Q460.0 778.8 462.5 777.0L473.8 769.2Q476.2 767.5 479.2 767.0L487.0 765.5Q490.0 765.0 492.8 763.9L499.7 761.1Q502.5 760.0 505.2 758.7L507.3 757.6Q510.0 756.2 513.0 756.7L514.5 757.0Q517.5 757.5 520.3 756.4L521.0 756.1Q523.8 755.0 524.0 758.0L524.3 762.0Q524.5 765.0 525.2 765.6L525.3 765.7Q526.0 766.2 528.8 766.8L529.4 766.9Q532.2 767.5 533.6 770.2L535.9 774.8Q537.2 777.5 539.4 779.6L541.4 781.6Q543.5 783.8 546.4 784.3L553.1 785.7Q556.0 786.2 558.8 787.4L565.7 790.1Q568.5 791.2 570.9 793.0L576.1 797.0Q578.5 798.8 579.4 801.6L580.6 805.9Q581.5 808.8 580.7 811.6L579.3 817.1Q578.5 820.0 577.7 822.9L576.8 825.9Q576.0 828.8 576.5 828.8L577.0 828.8M583.5 661.2L589.9 651.3Q591.5 648.8 591.8 645.8L592.7 635.5Q593.0 632.5 595.3 630.6L601.2 625.7Q603.5 623.8 605.5 621.5L606.5 620.3Q608.5 618.0 610.9 616.2L614.9 613.1Q617.2 611.2 619.1 608.9L622.9 604.3Q624.8 602.0 627.8 602.0L633.0 602.0Q636.0 602.0 638.9 602.8L644.4 604.2Q647.2 605.0 650.1 606.0L653.2 607.0Q656.0 608.0 658.8 609.1L663.2 610.9Q666.0 612.0 668.6 613.5L673.4 616.5Q676.0 618.0 678.2 620.0L680.8 622.5Q683.0 624.5 685.5 622.9L688.5 621.1Q691.0 619.5 693.8 618.4L698.2 616.6Q701.0 615.5 704.0 615.7L708.0 616.0Q711.0 616.2 713.9 615.4L716.9 614.6Q719.8 613.8 720.1 610.8L720.6 606.7Q721.0 603.8 723.0 601.5L724.0 600.5Q726.0 598.2 728.8 598.1L729.4 598.1Q732.2 598.0 734.4 600.1L738.8 604.2Q741.0 606.2 743.0 608.5L747.8 614.0Q749.8 616.2 752.6 617.0L753.2 617.2Q756.0 618.0 757.8 615.6L759.2 613.7Q761.0 611.2 763.3 609.4L764.9 608.1Q767.2 606.2 770.2 606.9L775.6 608.1Q778.5 608.8 781.3 609.8L785.7 611.4Q788.5 612.5 791.3 613.7L799.0 617.0M531.0 656.2L530.2 662.0Q529.8 665.0 530.3 667.9L531.7 674.6Q532.2 677.5 533.9 680.0L535.6 682.5Q537.2 685.0 537.2 688.0L537.2 695.8Q537.2 698.8 534.3 698.4L529.0 697.8Q526.0 697.5 526.0 694.7L526.0 691.2M676.0 723.8L669.9 726.7Q667.2 728.0 665.3 730.3L664.2 731.5Q662.2 733.8 660.1 735.9L659.4 736.6Q657.2 738.8 656.6 741.7L656.2 743.3Q655.5 746.2 657.9 748.0L659.8 749.5Q662.2 751.2 664.6 753.1L666.2 754.4Q668.5 756.2 666.8 758.5L666.4 759.0Q664.8 761.2 661.8 760.8L659.0 760.4Q656.0 760.0 653.3 761.3L648.7 763.7Q646.0 765.0 644.2 767.4L640.3 772.6Q638.5 775.0 635.6 775.7L626.4 778.0Q623.5 778.8 622.6 781.6L619.4 790.9Q618.5 793.8 618.7 796.7L619.5 805.8Q619.8 808.8 621.0 811.5L623.5 817.3Q624.8 820.0 625.0 823.0L626.5 837.5M577.0 828.8L585.2 821.9Q587.5 820.0 590.3 819.1L595.9 817.2Q598.8 816.2 601.6 815.2L609.7 812.3Q612.5 811.2 615.4 810.5L619.6 809.5Q622.5 808.8 619.6 809.6L598.9 816.1Q596.0 817.0 598.8 816.0L619.8 808.8" fill="none" stroke="#808080" stroke-width="1.45" stroke-linejoin="round"/>
<path d="M380.0 317.5L381.3 311.0Q381.5 310.0 381.5 309.0L382.2 287.2Q382.2 286.2 382.7 285.4L386.8 278.4Q387.2 277.5 388.0 276.9L392.7 273.1Q393.5 272.5 394.4 272.1L401.3 269.1Q402.2 268.8 402.4 267.8L403.8 258.5Q404.0 257.5 404.3 256.5L409.5 238.5Q409.8 237.5 410.5 236.9L422.7 226.9Q423.5 226.2 424.3 225.7L442.7 213.1Q443.5 212.5 443.8 211.5L448.2 196.0Q448.5 195.0 448.7 194.0L453.3 176.0Q453.5 175.0 454.4 174.6L460.1 172.1Q461.0 171.8 462.0 171.5L475.0 168.2Q476.0 168.0 477.0 167.7L489.3 164.5Q490.2 164.2 490.4 165.2L493.3 179.5Q493.5 180.5 494.4 180.9L505.1 185.8Q506.0 186.2 507.0 186.5L518.0 189.7Q519.0 190.0 520.0 189.8L523.0 189.0Q524.0 188.8 524.2 187.8L525.8 177.2Q526.0 176.2 526.9 175.9L530.1 174.6Q531.0 174.2 532.0 174.3L540.0 174.9Q541.0 175.0 541.8 175.6L550.2 181.9Q551.0 182.5 551.4 183.4L553.6 189.1Q554.0 190.0 554.1 191.0L555.4 199.0Q555.5 200.0 554.5 200.0L552.0 200.0Q551.0 200.0 550.8 201.0L549.4 207.8Q549.2 208.8 550.2 209.0L561.3 211.8Q562.2 212.0 563.2 211.7L570.0 209.8Q571.0 209.5 571.5 208.7L574.2 204.6Q574.8 203.8 574.6 202.8L573.7 197.2Q573.5 196.2 572.6 195.9L569.4 194.8Q568.5 194.5 567.7 195.1L564.3 197.4Q563.5 198.0 562.9 197.2L560.4 193.8Q559.8 193.0 560.1 193.7L560.2 193.9Q560.6 194.6 560.3 193.6L559.7 191.8Q559.4 190.8 560.4 190.5L561.9 189.9Q562.8 189.5 563.6 188.9L565.4 187.6Q566.2 187.0 566.7 186.1L568.2 183.6Q568.7 182.7 568.2 181.9L567.2 180.2Q566.7 179.4 566.6 178.4L566.3 175.3Q566.2 174.3 566.6 173.4L567.4 171.8Q567.9 170.9 568.7 170.4L570.4 169.3Q571.2 168.7 572.1 169.3L573.0 169.9Q573.8 170.4 574.3 171.2L575.3 172.6Q575.8 173.4 576.4 172.6L576.9 171.7Q577.5 170.9 578.1 170.1L579.1 168.8Q579.7 168.0 580.7 167.8L584.6 166.6Q585.6 166.4 586.6 166.4L590.5 166.4Q591.5 166.4 592.5 166.5L594.8 166.9Q595.7 167.0 596.5 166.3L598.1 164.8Q598.8 164.2 598.3 163.3L597.0 160.8Q596.6 159.9 595.9 159.2L594.4 157.3Q593.7 156.6 593.7 155.6L593.7 149.1Q593.7 148.1 593.9 147.1L594.7 142.3Q594.9 141.4 594.3 140.5L593.8 139.6Q593.2 138.8 592.7 138.0L591.2 135.5Q590.7 134.6 590.2 133.7L588.6 130.4Q588.1 129.5 587.3 129.0L585.1 127.5Q584.3 127.0 583.5 126.4L581.8 125.1Q581.0 124.5 581.4 123.5L581.9 122.0Q582.2 121.1 583.1 120.6L585.6 119.5Q586.5 119.1 586.9 118.1L587.4 116.9Q587.8 116.0 587.4 115.1L586.8 113.6Q586.5 112.6 586.9 111.8L587.7 110.5Q588.1 109.6 589.1 109.4L591.4 109.1Q592.4 108.9 593.4 108.8L597.3 108.2Q598.3 108.1 599.1 107.5L601.7 105.6Q602.5 105.0 603.0 104.2L604.5 101.7Q605.0 100.8 605.4 99.9L607.2 95.8Q607.6 94.9 608.3 94.2L611.9 90.5Q612.6 89.8 613.5 89.4L616.8 87.7Q617.7 87.3 618.6 86.9L623.5 85.1Q624.5 84.8 625.4 84.4L630.3 82.6Q631.2 82.2 632.1 81.8L636.2 80.1Q637.1 79.7 638.0 79.2L640.5 78.0Q641.4 77.5 642.2 78.0L643.9 79.2Q644.7 79.7 645.7 79.6L648.8 79.3Q649.8 79.2 650.8 78.9L652.6 78.3Q653.5 78.0 654.1 77.2L655.2 75.5Q655.7 74.6 656.5 74.0L658.3 72.7Q659.1 72.1 659.7 71.3L661.4 68.7Q662.0 67.9 661.8 66.9L661.4 64.6Q661.3 63.6 660.7 62.8L658.8 60.2Q658.2 59.4 658.2 58.4L658.2 54.5Q658.2 53.5 658.6 52.6L659.6 50.2Q659.9 49.3 660.7 48.7L663.4 46.5Q664.2 45.9 664.6 45.0L666.7 40.8M380.0 317.5L375.6 324.2Q375.0 325.0 374.1 325.5L367.9 329.0Q367.0 329.5 366.2 330.1L362.8 333.1Q362.0 333.8 361.9 334.7L361.3 340.3Q361.2 341.2 361.6 342.2L363.4 347.8Q363.8 348.8 364.4 349.5L369.4 355.5Q370.0 356.2 370.4 357.1L372.1 360.4Q372.5 361.2 372.4 362.2L372.1 367.8Q372.0 368.8 371.2 369.4L368.3 371.9Q367.5 372.5 366.5 372.7L357.2 374.8Q356.2 375.0 356.0 376.0L354.8 380.3Q354.5 381.2 354.0 382.1L351.8 385.4Q351.2 386.2 350.3 385.9L342.2 383.3Q341.2 383.0 340.7 383.8L338.6 386.7Q338.0 387.5 337.0 387.6L333.0 387.9Q332.0 388.0 331.9 389.0L330.9 399.0Q330.8 400.0 330.7 401.0L330.1 406.5Q330.0 407.5 329.6 408.4L326.6 416.6Q326.2 417.5 325.9 418.4L322.9 426.6Q322.5 427.5 322.0 428.4L318.0 435.4Q317.5 436.2 316.5 436.4L314.0 436.8Q313.0 437.0 312.5 437.9L309.2 444.1Q308.8 445.0 308.9 446.0L309.3 448.5Q309.5 449.5 310.3 450.0L319.2 455.7Q320.0 456.2 320.9 456.7L332.9 463.3Q333.8 463.8 334.3 464.6L335.7 466.7Q336.2 467.5 336.4 468.5L336.6 471.0Q336.8 472.0 335.8 471.6L333.9 470.9Q333.0 470.5 332.5 471.4L329.2 477.1Q328.8 478.0 327.8 478.1L318.0 478.7Q317.0 478.8 317.0 479.7L317.5 490.3Q317.5 491.2 316.5 491.5L313.5 492.3Q312.5 492.5 312.6 493.5L313.2 501.5Q313.2 502.5 312.8 503.4L310.5 507.9Q310.0 508.8 310.2 509.7L311.8 519.0Q312.0 520.0 312.1 521.0L312.4 524.0Q312.5 525.0 312.1 525.9L310.9 528.6Q310.5 529.5 311.0 530.3L315.7 537.9Q316.2 538.8 316.3 539.7L316.9 549.8Q317.0 550.8 318.0 550.8L330.3 551.2Q331.2 551.2 332.0 551.9L339.2 558.1Q340.0 558.8 340.5 559.6L345.8 569.1Q346.2 570.0 345.7 569.2L340.5 560.8Q340.0 560.0 340.5 560.9L349.5 577.9Q350.0 578.8 350.4 579.6L357.1 592.9Q357.5 593.8 357.9 594.7L362.1 604.1Q362.5 605.0 362.6 606.0L363.6 612.8Q363.8 613.8 364.0 614.7L365.3 620.8Q365.5 621.8 366.5 621.8L375.2 621.8Q376.2 621.8 377.2 621.5L381.5 620.3Q382.5 620.0 383.5 620.1L387.0 620.4Q388.0 620.5 388.7 621.2L394.3 626.8Q395.0 627.5 395.6 628.3L401.9 637.9Q402.5 638.8 401.7 639.4L397.0 643.1Q396.2 643.8 395.6 644.5L393.1 648.0Q392.5 648.8 392.3 649.7L391.0 655.3Q390.8 656.2 390.9 657.2L391.8 662.8Q392.0 663.8 392.6 664.6L395.7 669.2Q396.2 670.0 397.1 670.5L404.2 675.0Q405.0 675.5 405.9 675.9L416.1 680.8Q417.0 681.2 416.8 682.2L415.2 689.0Q415.0 690.0 415.0 691.0L414.5 699.0Q414.5 700.0 414.5 701.0L414.5 707.8Q414.5 708.8 413.5 708.8L399.7 709.5Q398.8 709.5 398.4 710.5L397.3 714.0Q397.0 715.0 396.9 716.0L396.4 720.3Q396.2 721.2 395.8 722.1L392.9 727.9Q392.5 728.8 392.1 729.7L390.4 734.1Q390.0 735.0 390.0 736.0L390.0 741.5Q390.0 742.5 389.2 743.1L383.8 746.9Q383.0 747.5 382.3 748.2L379.5 750.6Q378.8 751.2 378.8 752.2L378.8 756.0Q378.8 757.0 379.7 757.4L385.3 759.6Q386.2 760.0 387.2 760.1L391.5 760.4Q392.5 760.5 392.5 761.5L392.5 771.5Q392.5 772.5 391.8 773.2L384.5 779.8Q383.8 780.5 383.0 781.2L375.7 788.1Q375.0 788.8 374.2 789.4L367.0 795.6Q366.2 796.2 365.4 795.8L364.6 795.4Q363.8 795.0 362.9 795.6L357.1 799.4Q356.2 800.0 355.4 800.5L353.4 801.5Q352.5 802.0 352.3 803.0L352.2 804.0Q352.0 805.0 352.5 805.9L354.5 809.1Q355.0 810.0 356.0 809.7L366.5 806.5Q367.5 806.2 367.9 807.1L369.6 810.4Q370.0 811.2 370.3 812.2L371.7 816.5Q372.0 817.5 372.2 817.5L372.3 817.5Q372.5 817.5 371.7 818.1L368.3 820.6Q367.5 821.2 367.5 822.2L367.5 826.0Q367.5 827.0 368.2 827.7L375.6 835.5Q376.2 836.2 377.0 837.0L385.5 845.5Q386.2 846.2 387.2 846.4L394.0 847.8Q395.0 848.0 396.0 848.2L404.0 849.8Q405.0 850.0 405.9 849.6L415.3 845.9Q416.2 845.5 417.2 845.8L424.0 847.7Q425.0 848.0 426.0 848.0L436.5 847.5Q437.5 847.5 438.3 848.1L444.2 853.1Q445.0 853.8 446.0 854.0L453.5 856.0Q454.5 856.2 454.6 857.2L456.2 877.8Q456.2 878.8 456.9 879.5L459.4 883.0Q460.0 883.8 460.8 884.4L464.2 886.9Q465.0 887.5 464.6 888.4L461.7 894.1Q461.2 895.0 462.2 894.7L473.5 891.5Q474.5 891.2 475.5 891.4L489.0 892.9Q490.0 893.0 490.4 893.9L491.6 896.1Q492.0 897.0 493.0 897.2L500.3 899.0Q501.2 899.2 501.7 898.4L510.8 882.6Q511.2 881.8 512.2 881.8L519.5 882.0Q520.5 882.0 521.2 882.7L529.3 890.6Q530.0 891.2 531.0 891.5L537.8 893.5Q538.8 893.8 538.8 892.8L538.8 881.5Q538.8 880.5 539.4 879.7L542.4 876.3Q543.0 875.5 544.0 875.2L552.8 872.8Q553.8 872.5 554.0 871.5L557.7 857.2Q558.0 856.2 559.0 856.6L566.5 858.9Q567.5 859.2 568.3 858.7L574.2 855.0Q575.0 854.5 575.1 853.5L576.1 844.7Q576.2 843.8 577.2 843.3L586.6 839.2Q587.5 838.8 588.3 839.3L589.2 839.9Q590.0 840.5 591.0 840.5L614.0 840.5Q615.0 840.5 615.2 839.5L615.3 839.0Q615.5 838.0 616.5 838.1L625.0 839.1Q626.0 839.2 625.0 839.3L597.0 840.5Q596.0 840.5 597.0 840.5L613.8 840.5Q614.8 840.5 615.0 839.5L615.3 838.5Q615.5 837.5 616.5 837.7L625.5 839.1Q626.5 839.2 627.3 838.6L630.2 836.1Q631.0 835.5 631.9 835.8L641.3 839.2Q642.2 839.5 643.2 839.8L652.6 842.9Q653.5 843.2 653.8 844.2L655.7 851.0Q656.0 852.0 656.6 852.8L661.6 859.2Q662.2 860.0 663.2 859.9L666.3 859.6Q667.2 859.5 667.0 860.5L665.8 864.5Q665.5 865.5 666.5 865.8L677.5 869.2Q678.5 869.5 679.3 870.2L684.0 874.3Q684.8 875.0 685.5 875.7L689.7 879.3Q690.5 880.0 691.5 879.7L693.8 879.0Q694.8 878.8 695.7 879.1L698.8 880.2Q699.8 880.5 700.6 881.0L705.2 884.0Q706.0 884.5 706.8 885.0L710.7 887.5Q711.5 888.0 711.6 887.0L712.2 878.8M80.0 728.8L84.8 733.8Q85.5 734.5 86.2 735.2L94.3 744.3Q95.0 745.0 95.7 745.7L104.3 754.3Q105.0 755.0 104.8 756.0L104.5 757.0Q104.2 758.0 104.6 759.0L110.2 776.5Q110.5 777.5 111.4 777.9L119.1 781.3Q120.0 781.8 119.6 782.7L115.4 794.1Q115.0 795.0 114.1 795.4L112.9 795.9Q112.0 796.2 112.7 796.9L126.8 810.6Q127.5 811.2 127.4 812.2L126.4 820.3Q126.2 821.2 125.5 821.9L116.5 829.4Q115.8 830.0 116.5 830.6L125.5 838.1Q126.2 838.8 126.4 839.7L127.8 847.8Q128.0 848.8 128.9 849.2L130.4 850.0Q131.2 850.5 131.9 849.8L139.8 841.2Q140.5 840.5 141.5 840.5L151.5 840.0Q152.5 840.0 153.5 839.7L169.0 835.3Q170.0 835.0 170.9 834.5L176.1 831.7Q177.0 831.2 177.6 830.4L184.4 820.1Q185.0 819.2 186.0 819.3L194.0 819.9Q195.0 820.0 195.9 820.3L209.1 825.2Q210.0 825.5 210.5 826.3L219.5 840.4Q220.0 841.2 221.0 841.2L221.5 841.2Q222.5 841.2 222.9 840.3L228.3 827.9Q228.8 827.0 228.5 826.0L227.0 818.5Q226.8 817.5 227.5 816.8L235.5 809.4Q236.2 808.8 236.4 807.8L236.6 805.2Q236.8 804.2 237.5 803.6L243.0 798.7Q243.8 798.0 244.7 797.8L252.8 795.7Q253.8 795.5 254.6 796.0L258.7 798.7Q259.5 799.2 260.5 799.5L271.5 801.8Q272.5 802.0 273.3 802.6L279.9 807.4Q280.8 808.0 281.7 807.9L291.5 806.9Q292.5 806.8 293.4 806.3L297.8 804.2Q298.8 803.8 299.6 804.2L306.6 807.6Q307.5 808.0 308.4 807.7L315.3 805.3Q316.2 805.0 316.3 804.0L317.4 789.7Q317.5 788.8 318.4 788.4L325.3 785.4Q326.2 785.0 327.1 785.6L340.4 795.6Q341.2 796.2 342.2 796.6L351.6 799.7Q352.5 800.0 352.8 800.9L353.8 803.8" fill="none" stroke="#000" stroke-width="2.8" stroke-linejoin="round" stroke-linecap="round"/>
<path d="M563.5 198.0L561.4 195.2Q559.8 193.0 560.1 193.7L560.2 193.9Q560.6 194.6 560.1 192.9L560.0 192.5Q559.4 190.8 560.9 190.2L561.3 190.1Q562.8 189.5 564.3 188.4L564.7 188.1Q566.2 187.0 567.3 185.1L567.6 184.6Q568.7 182.7 567.8 181.2L567.6 180.9Q566.7 179.4 566.5 177.1L566.4 176.6Q566.2 174.3 566.9 172.8L567.1 172.4Q567.9 170.9 569.4 169.9L569.7 169.7Q571.2 168.7 572.4 169.5L572.6 169.6Q573.8 170.4 574.7 171.8L574.9 172.1Q575.8 173.4 576.6 172.3L576.7 172.1Q577.5 170.9 578.5 169.6L578.7 169.3Q579.7 168.0 582.4 167.3L582.9 167.1Q585.6 166.4 588.3 166.4L588.9 166.4Q591.5 166.4 593.4 166.7L593.8 166.7Q595.7 167.0 597.1 165.7L597.4 165.4Q598.8 164.2 597.8 162.3L597.6 161.8Q596.6 159.9 595.3 158.4L595.0 158.1Q593.7 156.6 593.7 153.6L593.7 151.1Q593.7 148.1 594.2 145.2L594.4 144.3Q594.9 141.4 594.1 140.2L594.0 140.0Q593.2 138.8 592.1 136.9L591.8 136.5Q590.7 134.6 589.5 132.3L589.3 131.8Q588.1 129.5 586.4 128.4L586.0 128.1Q584.3 127.0 582.8 125.9L582.5 125.6Q581.0 124.5 581.6 122.9L581.7 122.6Q582.2 121.1 584.1 120.2L584.6 120.0Q586.5 119.1 587.1 117.7L587.2 117.4Q587.8 116.0 587.2 114.5L587.1 114.2Q586.5 112.6 587.2 111.3L587.4 111.0Q588.1 109.6 590.0 109.3L590.5 109.2Q592.4 108.9 595.0 108.5L595.6 108.5Q598.3 108.1 600.2 106.7L600.6 106.4Q602.5 105.0 603.6 103.1L603.9 102.7Q605.0 100.8 606.2 98.2L606.4 97.6Q607.6 94.9 609.7 92.8L610.5 92.0Q612.6 89.8 614.9 88.7L615.4 88.4Q617.7 87.3 620.5 86.2L621.7 85.8Q624.5 84.8 627.3 83.7L628.4 83.3Q631.2 82.2 633.9 81.1L634.5 80.8Q637.1 79.7 639.0 78.7L639.5 78.5Q641.4 77.5 642.9 78.5L643.2 78.7Q644.7 79.7 647.0 79.5L647.5 79.4Q649.8 79.2 651.5 78.7L651.8 78.5Q653.5 78.0 654.5 76.5L654.7 76.1Q655.7 74.6 657.2 73.5L657.6 73.2Q659.1 72.1 660.4 70.2L660.7 69.8Q662.0 67.9 661.7 66.0L661.6 65.5Q661.3 63.6 659.9 61.7L659.6 61.3Q658.2 59.4 658.2 56.8L658.2 56.2Q658.2 53.5 659.0 51.6L659.2 51.2Q659.9 49.3 661.8 47.8L662.3 47.4Q664.2 45.9 665.3 43.6L666.7 40.8M563.5 212.8L563.3 215.4Q563.2 217.6 562.9 219.4L562.8 219.8Q562.5 221.5 561.7 222.2L561.5 222.3Q560.6 223.0 559.5 223.4L559.2 223.5Q558.2 223.9 557.6 225.2L557.5 225.5Q557.0 226.8 556.9 228.4L556.8 228.7Q556.7 230.2 557.4 231.1L557.5 231.3Q558.2 232.2 559.5 232.6L559.8 232.7Q561.1 233.2 561.2 234.0L561.2 234.2Q561.3 235.1 560.3 236.2L560.1 236.4Q559.1 237.5 558.7 238.4L558.6 238.6Q558.2 239.5 558.8 240.3L559.0 240.5Q559.6 241.4 560.5 241.8L560.7 241.9Q561.6 242.4 561.2 243.3L561.2 243.4Q560.9 244.3 559.4 244.5L559.1 244.5Q557.7 244.6 556.5 244.9L556.2 245.0Q555.0 245.3 554.9 246.4L554.9 246.6Q554.8 247.7 555.2 249.0L555.3 249.3Q555.7 250.6 556.8 251.5L557.1 251.7Q558.2 252.6 559.2 252.6L559.5 252.6Q560.6 252.6 560.1 253.2L560.0 253.4Q559.6 254.0 558.1 253.8L557.7 253.8Q556.2 253.5 554.7 253.3L554.3 253.3Q552.8 253.1 552.2 254.2L552.0 254.4Q551.4 255.5 551.4 257.2L551.5 257.6Q551.6 259.4 552.1 261.1L552.2 261.5Q552.8 263.3 552.8 265.0L552.8 265.4Q552.8 267.1 551.7 268.4L551.5 268.7Q550.4 270.0 549.7 271.1L549.6 271.4Q548.9 272.5 549.8 273.3L550.0 273.5Q550.9 274.4 552.2 273.8L552.5 273.6Q553.8 273.0 554.7 272.1L554.9 271.9Q555.7 271.0 556.6 271.5L556.8 271.6Q557.7 272.0 557.7 273.1L557.7 273.3Q557.7 274.4 556.6 275.5L556.3 275.8Q555.2 276.8 554.4 277.9L554.2 278.2Q553.3 279.3 553.1 280.4L553.0 280.6Q552.8 281.7 551.7 281.9L551.5 282.0Q550.4 282.2 549.3 281.7L549.1 281.7Q548.0 281.2 547.5 282.5L547.4 282.8Q547.0 284.1 546.6 285.4L546.5 285.7Q546.0 287.0 546.7 288.1L546.8 288.4Q547.5 289.5 548.8 289.9L549.1 290.0Q550.4 290.4 551.5 290.0L551.7 289.9Q552.8 289.5 553.0 288.6L553.1 288.4Q553.3 287.5 552.6 287.3L552.5 287.3Q551.8 287.0 551.8 288.6L551.8 288.9Q551.8 290.4 552.3 292.0L552.4 292.3Q552.8 293.8 554.1 295.1L554.4 295.4Q555.7 296.7 556.8 298.5L557.1 298.9Q558.2 300.6 559.2 302.4L559.5 302.8Q560.6 304.5 560.8 306.0L560.8 306.4Q561.1 307.9 561.0 307.7L561.0 307.7Q561.0 307.5 559.9 310.3L559.1 312.2Q558.0 315.0 558.8 317.8L559.0 318.4Q559.8 321.2 562.5 322.4L563.2 322.6Q566.0 323.8 564.9 326.0L564.6 326.5Q563.5 328.8 561.8 329.1L561.4 329.2Q559.8 329.5 561.4 332.0L561.8 332.5Q563.5 335.0 566.3 335.9L568.2 336.6Q571.0 337.5 570.6 340.5L570.2 343.3Q569.8 346.2 567.5 347.4L567.0 347.6Q564.8 348.8 565.3 350.2L565.4 350.5Q566.0 352.0 568.6 353.5L570.9 354.8Q573.5 356.2 576.1 357.8L577.2 358.5Q579.8 360.0 582.3 361.1L582.9 361.4Q585.5 362.5 584.4 365.3L584.1 366.0Q583.0 368.8 583.4 371.7L583.6 373.3Q584.0 376.2 585.2 379.0L586.1 381.0Q587.2 383.8 589.2 386.0L589.6 386.5Q591.5 388.8 591.5 391.0L591.5 391.5Q591.5 393.8 591.9 390.8L592.6 385.5Q593.0 382.5 594.9 381.1L595.3 380.9Q597.2 379.5 598.0 381.4L598.2 381.8Q599.0 383.8 598.8 386.6L598.7 387.2Q598.5 390.0 600.0 392.6L600.7 393.7Q602.2 396.2 602.6 397.4L602.7 397.6Q603.0 398.8 604.6 396.5L604.9 396.0Q606.5 393.8 609.0 395.4L609.7 395.9Q612.2 397.5 615.2 397.7L616.0 397.8Q619.0 398.0 617.2 400.4L616.5 401.3Q614.8 403.8 616.8 406.0L618.5 407.8Q620.5 410.0 620.7 412.2L620.8 412.8Q621.0 415.0 619.3 417.2L618.9 417.8Q617.2 420.0 616.7 421.7L616.6 422.1Q616.0 423.8 618.6 425.3L619.7 426.0Q622.2 427.5 623.4 430.3L624.3 432.2Q625.5 435.0 624.0 435.9L623.7 436.1Q622.2 437.0 623.1 439.9L623.9 442.1Q624.8 445.0 625.9 447.2L626.1 447.8Q627.2 450.0 630.0 451.3L630.8 451.7Q633.5 453.0 635.5 455.2L637.8 457.8Q639.8 460.0 641.3 462.6L642.0 463.7Q643.5 466.2 646.0 467.9L648.5 469.6Q651.0 471.2 653.2 470.7L653.8 470.6Q656.0 470.0 658.6 471.5L659.7 472.2Q662.2 473.8 663.4 476.5L663.6 477.2Q664.8 480.0 667.0 480.2L667.5 480.3Q669.8 480.5 672.0 479.4L672.5 479.1Q674.8 478.0 675.9 480.0L676.1 480.5Q677.2 482.5 677.5 485.5L677.7 487.0Q678.0 490.0 679.7 492.5L680.6 493.8Q682.2 496.2 682.2 499.2L682.2 503.2Q682.2 506.2 683.9 508.5L684.3 509.0Q686.0 511.2 688.2 510.5L688.8 510.3Q691.0 509.5 691.9 506.6L693.1 502.9Q694.0 500.0 696.8 499.0L698.2 498.5Q701.0 497.5 704.0 497.5L708.0 497.5Q711.0 497.5 712.8 499.9L716.7 505.1Q718.5 507.5 720.2 510.0L725.5 517.5Q727.2 520.0 729.2 522.2L731.5 524.8Q733.5 527.0 736.2 528.3L737.3 528.7Q740.0 530.0 742.0 530.4L742.4 530.5Q744.4 530.9 746.4 531.2L746.9 531.3Q748.9 531.7 749.6 533.2L749.8 533.5Q750.5 535.0 751.3 536.0L751.5 536.2Q752.2 537.2 753.7 536.5L754.0 536.3Q755.5 535.5 757.3 534.8L757.7 534.6Q759.4 533.9 759.9 534.9L760.0 535.1Q760.5 536.1 763.5 536.2L764.8 536.3Q767.7 536.4 769.0 535.3L769.3 535.0Q770.5 533.9 771.8 532.1L772.0 531.7Q773.3 530.0 774.8 528.2L775.1 527.9Q776.6 526.1 777.6 525.6L777.8 525.5Q778.8 525.0 780.6 525.7L781.0 525.9Q782.7 526.7 784.0 528.2L784.3 528.5Q785.5 530.0 786.5 531.7L786.7 532.1Q787.7 533.9 789.2 534.9L789.6 535.1Q791.1 536.1 793.1 535.8L793.5 535.8Q795.5 535.5 797.7 536.5L798.2 536.8Q800.5 537.8 801.7 539.3L802.0 539.6Q803.3 541.1 804.0 543.1L804.2 543.5Q804.9 545.5 805.2 546.0L805.2 546.1Q805.5 546.6 807.0 544.6L807.3 544.2Q808.8 542.2 809.4 539.3L809.8 537.4Q810.5 534.4 812.0 534.7L812.3 534.7Q813.8 535.0 815.3 536.2L815.6 536.5Q817.1 537.8 817.6 539.8L817.7 540.2Q818.2 542.2 817.0 544.4L816.7 544.9Q815.5 547.2 813.5 548.9L813.0 549.3Q811.0 551.1 808.5 552.3L808.0 552.6Q805.5 553.9 803.7 555.3L803.3 555.7Q801.6 557.2 801.8 558.7L801.9 559.0Q802.2 560.5 804.2 561.5L804.6 561.7Q806.6 562.7 807.8 564.0L808.1 564.3Q809.4 565.5 808.6 567.0L808.5 567.3Q807.7 568.8 806.2 570.6L805.9 571.0Q804.4 572.7 804.9 574.0L805.0 574.2Q805.5 575.5 807.0 576.7L807.3 577.0Q808.8 578.3 809.6 580.0L809.7 580.4Q810.5 582.2 810.2 584.2L810.2 584.6Q809.9 586.6 808.4 588.1L808.1 588.4Q806.6 589.9 804.3 590.9L803.8 591.1Q801.6 592.1 800.3 593.1L800.1 593.4Q798.8 594.4 798.3 595.9L798.2 596.2Q797.7 597.7 798.2 600.7L798.3 601.4Q798.8 604.4 798.8 607.3L798.8 608.0Q798.8 611.0 798.6 613.0L798.5 613.5Q798.3 615.4 799.3 616.7L799.5 617.0Q800.5 618.2 802.0 619.2L802.3 619.4Q803.8 620.4 805.3 621.2L805.6 621.4Q807.1 622.1 808.1 623.1L808.4 623.3Q809.4 624.3 808.6 625.6L808.5 625.9Q807.7 627.1 806.5 627.3L806.2 627.3Q804.9 627.4 803.7 626.3L803.4 626.0Q802.2 624.9 801.2 623.6L800.9 623.4Q799.9 622.1 798.4 621.7L798.1 621.6Q796.6 621.2 795.5 621.9L795.3 622.0Q794.2 622.7 794.5 623.9L794.6 624.2Q794.9 625.4 796.2 626.7L796.5 627.0Q797.7 628.2 799.2 629.5L799.5 629.7Q801.0 631.0 801.8 632.2L802.0 632.5Q802.7 633.8 802.0 634.8L801.8 635.0Q801.0 636.0 799.0 636.5L798.6 636.6Q796.6 637.1 794.5 639.2L790.6 642.9Q788.5 645.0 786.4 647.1L783.1 650.4Q781.0 652.5 778.2 653.6L776.3 654.4Q773.5 655.5 771.6 657.9L767.9 662.6Q766.0 665.0 764.0 667.3L759.2 672.7Q757.2 675.0 755.3 677.3L752.9 680.2Q751.0 682.5 751.6 684.2L751.7 684.6Q752.2 686.2 755.0 687.4L755.7 687.6Q758.5 688.8 758.5 691.0L758.5 691.5Q758.5 693.8 757.4 696.6L755.8 700.9Q754.8 703.8 753.8 706.6L751.9 712.2Q751.0 715.0 749.9 717.8L748.3 722.2Q747.2 725.0 745.6 727.5L743.9 730.0Q742.2 732.5 740.5 734.9L736.5 740.1Q734.8 742.5 732.5 744.2L732.0 744.6Q729.8 746.2 726.8 746.9L725.2 747.3Q722.2 748.0 720.3 750.3L719.2 751.5Q717.2 753.8 716.7 756.6L716.6 757.2Q716.0 760.0 717.5 762.6L718.2 763.7Q719.8 766.2 718.6 767.9L718.4 768.3Q717.2 770.0 714.4 769.8L713.8 769.7Q711.0 769.5 708.8 771.4L708.2 771.8Q706.0 773.8 706.6 776.0L706.7 776.5Q707.2 778.8 709.6 780.7L712.4 783.1Q714.8 785.0 716.6 787.3L717.9 788.9Q719.8 791.2 720.3 790.7L720.4 790.6Q721.0 790.0 720.8 793.0L720.7 794.5Q720.5 797.5 718.5 799.7L715.5 802.8Q713.5 805.0 711.4 807.1L709.4 809.1Q707.2 811.2 706.4 813.5L706.1 814.0Q705.2 816.2 705.9 819.2L706.6 822.1Q707.2 825.0 708.1 827.9L709.7 833.4Q710.5 836.2 711.0 839.2L711.8 844.5Q712.2 847.5 712.3 850.5L712.5 862.0Q712.5 865.0 712.4 868.0L712.3 875.8Q712.2 878.8 712.0 881.7L711.5 888.0M712.2 878.8L714.0 881.1Q715.5 883.0 717.4 882.2L717.8 882.0Q719.8 881.2 722.7 881.8L725.6 882.4Q728.5 883.0 731.3 882.1L733.2 881.4Q736.0 880.5 738.5 878.8L739.8 877.9Q742.2 876.2 743.9 874.0L744.3 873.5Q746.0 871.2 748.8 871.0L749.4 871.0Q752.2 870.8 753.4 873.2L753.6 873.8Q754.8 876.2 757.0 877.9L757.5 878.3Q759.8 880.0 761.4 880.2L761.8 880.3Q763.5 880.5 765.9 882.3L766.6 882.7Q769.0 884.5 771.2 883.0L771.8 882.7Q774.0 881.2 775.5 882.0L775.8 882.2Q777.2 883.0 779.2 885.3L780.3 886.5Q782.2 888.8 784.4 890.9L786.4 892.9Q788.5 895.0 791.4 895.7L794.3 896.3Q797.2 897.0 799.5 899.0L801.2 900.5Q803.5 902.5 805.5 904.7L807.8 907.3Q809.8 909.5 812.5 910.8L813.3 911.2Q816.0 912.5 818.8 912.5L819.4 912.5Q822.2 912.5 824.4 914.6L827.6 917.9Q829.8 920.0 830.9 922.2L831.1 922.8Q832.2 925.0 833.4 925.9L833.6 926.1Q834.8 927.0 832.5 927.8L832.0 928.0Q829.8 928.8 827.5 930.7L827.0 931.1Q824.8 933.0 823.6 935.0L823.4 935.5Q822.2 937.5 822.8 940.3L822.9 940.9Q823.5 943.8 826.2 945.1L828.3 946.2Q831.0 947.5 831.2 949.2L831.3 949.6Q831.5 951.2 833.8 953.2L836.2 955.1Q838.5 957.0 841.5 957.0L843.0 957.0Q846.0 957.0 847.7 958.9L848.1 959.3Q849.8 961.2 851.4 961.8L851.8 961.9Q853.5 962.5 853.2 965.5L852.5 973.3Q852.2 976.2 855.1 975.7L855.7 975.6Q858.5 975.0 860.7 977.0L861.8 978.0Q864.0 980.0 862.6 982.6L859.9 987.4Q858.5 990.0 857.0 992.6L856.3 993.7Q854.8 996.2 852.9 993.9L851.6 992.3Q849.8 990.0 847.5 989.2L847.0 989.0Q844.8 988.2 842.5 989.0L842.0 989.2Q839.8 990.0 840.2 993.0L840.5 994.5Q841.0 997.5 842.9 999.8L844.1 1001.4Q846.0 1003.8 846.9 1006.6L847.1 1007.2Q848.0 1010.0 851.0 1010.0L853.0 1010.0Q856.0 1010.0 857.1 1012.8L857.4 1013.5Q858.5 1016.2 857.2 1019.0L856.8 1019.8Q855.5 1022.5 857.3 1024.9L860.4 1028.9Q862.2 1031.2 864.2 1033.6L866.6 1036.4Q868.5 1038.8 870.0 1041.3L870.7 1042.4Q872.2 1045.0 875.1 1044.4L875.7 1044.3Q878.5 1043.8 879.6 1045.4L879.9 1045.8Q881.0 1047.5 882.1 1049.8L883.5 1052.5" fill="none" stroke="#000" stroke-width="3.3" stroke-linejoin="round" stroke-linecap="round"/>
<text x="425" y="367.5" font-size="18.9" font-weight="bold" text-anchor="middle">Wiltz</text>
<path d="M429.45 374.15v8.8" stroke="#000" stroke-width="1.4"/><path d="M426.35 378.55h6.2" stroke="#000" stroke-width="2.5" stroke-linecap="round"/>
<text x="563.5" y="487.5" font-size="18.9" font-weight="bold" text-anchor="middle">Ettelbruck</text>
<path d="M539.2 494.15v8.8" stroke="#000" stroke-width="1.4"/><path d="M536.1 498.55h6.2" stroke="#000" stroke-width="2.5" stroke-linecap="round"/>
<text x="611.5" y="710.75" font-size="18.9" font-weight="bold" text-anchor="middle">Findel</text>
<path d="M610.7 716.65v8.8" stroke="#000" stroke-width="1.4"/><path d="M607.6 721.05h6.2" stroke="#000" stroke-width="2.5" stroke-linecap="round"/>
<text x="503.5" y="837.5" font-size="18.9" font-weight="bold" text-anchor="middle">Esch/Alzette</text>
<path d="M467.7 844.15v8.8" stroke="#000" stroke-width="1.4"/><path d="M464.6 848.55h6.2" stroke="#000" stroke-width="2.5" stroke-linecap="round"/>
<circle cx="829" cy="237" r="5.3" fill="#f00" stroke="#000" stroke-width="1"/>
</g>
<rect x="94.3" y="50.5" width="218.4" height="49.8" fill="#fff" fill-opacity="0.85" stroke="#000" stroke-width="1.1"/>
<text transform="translate(100,69.7) scale(0.94,1)" font-size="17.7">Product: 0.5° Reflectivity</text><text transform="translate(100,90.6) scale(0.94,1)" font-size="17.7">Data: DWD</text>
<rect x="85.5" y="45.5" width="907.0" height="1001.0" fill="none" stroke="#000" stroke-width="1.1"/>
<text transform="translate(77.3,100.80) scale(0.94,1)" font-size="17.7" text-anchor="end">50.25°N</text>
<text transform="translate(77.3,251.80) scale(0.94,1)" font-size="17.7" text-anchor="end">50.1°N</text>
<text transform="translate(77.3,402.80) scale(0.94,1)" font-size="17.7" text-anchor="end">49.95°N</text>
<text transform="translate(77.3,552.80) scale(0.94,1)" font-size="17.7" text-anchor="end">49.8°N</text>
<text transform="translate(77.3,702.80) scale(0.94,1)" font-size="17.7" text-anchor="end">49.65°N</text>
<text transform="translate(77.3,852.80) scale(0.94,1)" font-size="17.7" text-anchor="end">49.5°N</text>
<text transform="translate(77.3,1000.80) scale(0.94,1)" font-size="17.7" text-anchor="end">49.35°N</text>
<text transform="translate(215.2,1066.6) scale(0.94,1)" font-size="17.7" text-anchor="middle">5.6°E</text>
<text transform="translate(344.2,1066.6) scale(0.94,1)" font-size="17.7" text-anchor="middle">5.8°E</text>
<text transform="translate(474.2,1066.6) scale(0.94,1)" font-size="17.7" text-anchor="middle">6°E</text>
<text transform="translate(604.2,1066.6) scale(0.94,1)" font-size="17.7" text-anchor="middle">6.2°E</text>
<text transform="translate(733.2,1066.6) scale(0.94,1)" font-size="17.7" text-anchor="middle">6.4°E</text>
<text transform="translate(863.2,1066.6) scale(0.94,1)" font-size="17.7" text-anchor="middle">6.6°E</text>
<text x="538" y="37.9" font-size="34.72" text-anchor="middle">31.12.2025 13:48 UTC</text>
<rect x="1050.5" y="963.84" width="45.0" height="32.56" fill="#6478a8"/>
<rect x="1050.5" y="931.68" width="45.0" height="32.56" fill="#5468a4"/>
<rect x="1050.5" y="899.52" width="45.0" height="32.56" fill="#4460a4"/>
<rect x="1050.5" y="867.36" width="45.0" height="32.56" fill="#4a7cb4"/>
<rect x="1050.5" y="835.20" width="45.0" height="32.56" fill="#5aa0c8"/>
<rect x="1050.5" y="803.04" width="45.0" height="32.56" fill="#68c0dc"/>
<rect x="1050.5" y="770.88" width="45.0" height="32.56" fill="#64d8c0"/>
<rect x="1050.5" y="738.71" width="45.0" height="32.56" fill="#40d46c"/>
<rect x="1050.5" y="706.55" width="45.0" height="32.56" fill="#14c820"/>
<rect x="1050.5" y="674.39" width="45.0" height="32.56" fill="#10b41c"/>
<rect x="1050.5" y="642.23" width="45.0" height="32.56" fill="#10a018"/>
<rect x="1050.5" y="610.07" width="45.0" height="32.56" fill="#108c14"/>
<rect x="1050.5" y="577.91" width="45.0" height="32.56" fill="#0c7410"/>
<rect x="1050.5" y="545.75" width="45.0" height="32.56" fill="#085c10"/>
<rect x="1050.5" y="513.59" width="45.0" height="32.56" fill="#44780c"/>
<rect x="1050.5" y="481.43" width="45.0" height="32.56" fill="#b0b008"/>
<rect x="1050.5" y="449.27" width="45.0" height="32.56" fill="#ffd800"/>
<rect x="1050.5" y="417.11" width="45.0" height="32.56" fill="#ffb800"/>
<rect x="1050.5" y="384.95" width="45.0" height="32.56" fill="#ff9c00"/>
<rect x="1050.5" y="352.79" width="45.0" height="32.56" fill="#ff8000"/>
<rect x="1050.5" y="320.62" width="45.0" height="32.56" fill="#e00000"/>
<rect x="1050.5" y="288.46" width="45.0" height="32.56" fill="#c00000"/>
<rect x="1050.5" y="256.30" width="45.0" height="32.56" fill="#9c0000"/>
<rect x="1050.5" y="224.14" width="45.0" height="32.56" fill="#780000"/>
<rect x="1050.5" y="191.98" width="45.0" height="32.56" fill="#ffdcff"/>
<rect x="1050.5" y="159.82" width="45.0" height="32.56" fill="#ffb4ff"/>
<rect x="1050.5" y="127.66" width="45.0" height="32.56" fill="#fc64fc"/>
<rect x="1050.5" y="95.50" width="45.0" height="32.56" fill="#e832e8"/>
<rect x="1050.5" y="95.5" width="45.0" height="900.5" fill="none" stroke="#000" stroke-width="1.1"/>
<path d="M1095.5 996.00h5" stroke="#000" stroke-width="1.1"/>
<text transform="translate(1105.2,1006.70) scale(0.956,1)" font-size="27.8">0</text>
<path d="M1095.5 867.36h5" stroke="#000" stroke-width="1.1"/>
<text transform="translate(1105.2,878.06) scale(0.956,1)" font-size="27.8">10</text>
<path d="M1095.5 738.71h5" stroke="#000" stroke-width="1.1"/>
<text transform="translate(1105.2,749.41) scale(0.956,1)" font-size="27.8">20</text>
<path d="M1095.5 610.07h5" stroke="#000" stroke-width="1.1"/>
<text transform="translate(1105.2,620.77) scale(0.956,1)" font-size="27.8">30</text>
<path d="M1095.5 481.43h5" stroke="#000" stroke-width="1.1"/>
<text transform="translate(1105.2,492.13) scale(0.956,1)" font-size="27.8">40</text>
<path d="M1095.5 352.79h5" stroke="#000" stroke-width="1.1"/>
<text transform="translate(1105.2,363.49) scale(0.956,1)" font-size="27.8">50</text>
<path d="M1095.5 224.14h5" stroke="#000" stroke-width="1.1"/>
<text transform="translate(1105.2,234.84) scale(0.956,1)" font-size="27.8">60</text>
<path d="M1095.5 95.50h5" stroke="#000" stroke-width="1.1"/>
<text transform="translate(1105.2,106.20) scale(0.956,1)" font-size="27.8">70</text>
<text transform="translate(1169,548) rotate(-90)" font-size="27.3" text-anchor="middle">dBZ</text>
</svg></body></html>
